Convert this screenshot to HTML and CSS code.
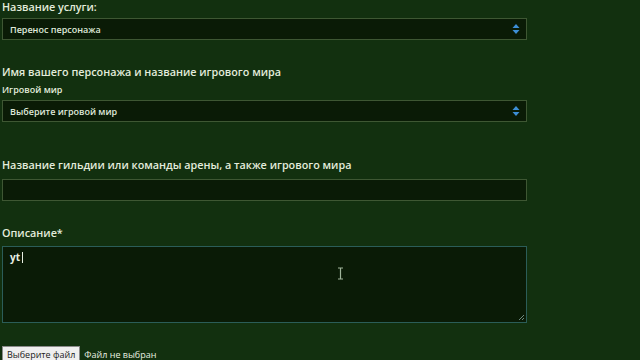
FILE: index.html
```html
<!DOCTYPE html>
<html lang="ru">
<head>
    <meta charset="UTF-8">
    <title>Заявка</title>
    <link rel="stylesheet" href="styles.css">
</head>
<body>

    <form class="ticket-form">
        <!-- Service -->
        <label class="field-title first">Название услуги:</label>
        <div class="select-box">
            <span>Перенос персонажа</span>
            <svg class="select-arrows" width="8" height="12" viewBox="0 0 8 12">
                <path d="M4 1 L7.5 5 H0.5 Z M4 11 L7.5 7 H0.5 Z" fill="#3d8fd6"/>
            </svg>
        </div>

        <!-- Character -->
        <label class="field-title section">Имя вашего персонажа и название игрового мира</label>
        <label class="field-sub">Игровой мир</label>
        <div class="select-box">
            <span>Выберите игровой мир</span>
            <svg class="select-arrows" width="8" height="12" viewBox="0 0 8 12">
                <path d="M4 1 L7.5 5 H0.5 Z M4 11 L7.5 7 H0.5 Z" fill="#3d8fd6"/>
            </svg>
        </div>

        <!-- Guild -->
        <label class="field-title guild">Название гильдии или команды арены, а также игрового мира</label>
        <div class="text-box"></div>

        <!-- Description -->
        <label class="field-title section">Описание*</label>
        <div class="text-area">
            <span class="typed">yt</span><span class="caret"></span>
            <svg class="ibeam" width="7" height="13" viewBox="0 0 7 13">
                <path d="M1 1 H6 M3.5 1 V12 M1 12 H6" stroke="#9fb49a" stroke-width="1.2" fill="none"/>
            </svg>
            <svg class="grip" width="7" height="7" viewBox="0 0 7 7">
                <path d="M6 1 L1 6 M6 4 L4 6" stroke="#6f8a80" stroke-width="1"/>
            </svg>
        </div>

        <!-- File -->
        <div class="file-row">
            <span class="file-btn">Выберите файл</span>
            <span class="file-name">Файл не выбран</span>
        </div>
    </form>

</body>
</html>
```

FILE: styles.css
```css
body {
    margin: 0;
    background-color: #12300f;
    color: #e3ecdc;
    font-family: 'Open Sans', 'Noto Sans', sans-serif;
    overflow: hidden;
}

.ticket-form {
    width: 525px;
    padding: 0 2px;
    display: flex;
    flex-direction: column;
}

.field-title {
    font-size: 10.8px;
    line-height: 16px;
    font-weight: 600;
}

.field-title.first {
    margin-top: -1px;
    margin-bottom: 3px;
}

.field-title.section {
    margin-top: 24px;
    margin-bottom: 3px;
}

.field-title.guild {
    margin-top: 35px;
    margin-bottom: 6px;
}

.field-sub {
    font-size: 9px;
    line-height: 14px;
    font-weight: 600;
    margin-bottom: 3px;
}

.select-box,
.text-box {
    box-sizing: border-box;
    height: 22px;
    background: #0a1b06;
    border: 1px solid #3e5733;
    display: flex;
    align-items: center;
    justify-content: space-between;
    padding: 0 6px 0 7px;
    font-size: 9px;
    font-weight: 600;
    color: #dfe8d9;
}

.text-area {
    position: relative;
    box-sizing: border-box;
    height: 77px;
    margin-top: 2px;
    background: #0a1b06;
    border: 1px solid #2b5d58;
    padding: 3px 7px;
    font-size: 10px;
    font-weight: 700;
    color: #e8efe2;
}

.caret {
    display: inline-block;
    width: 1px;
    height: 11px;
    margin-left: 2px;
    vertical-align: -2px;
    background: #e8efe2;
}

.ibeam {
    position: absolute;
    left: 334px;
    top: 20px;
}

.grip {
    position: absolute;
    right: 1px;
    bottom: 1px;
}

.file-row {
    margin-top: 23px;
    display: flex;
    align-items: center;
    gap: 4px;
    font-size: 9px;
}

.file-btn {
    background: #efefef;
    color: #1a1a1a;
    border: 1px solid #8a8a8a;
    padding: 1px 4px;
    line-height: 13px;
}

.file-name {
    color: #e8efe2;
}
```
